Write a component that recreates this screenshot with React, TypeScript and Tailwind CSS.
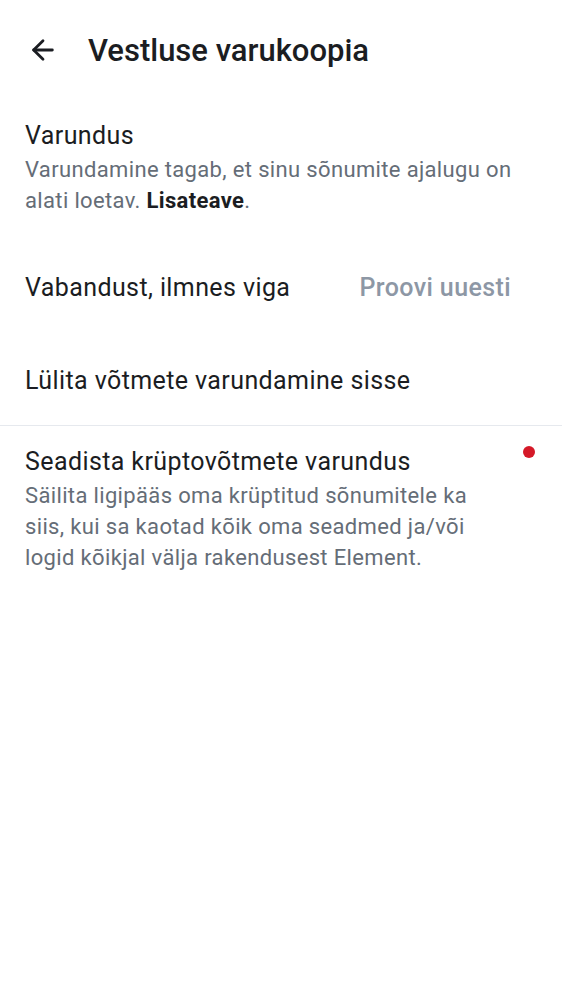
import { ArrowLeft } from 'lucide-react';

const FONT = { fontFamily: 'Roboto, "Noto Sans", sans-serif' };

export default function App() {
  return (
    <div className="min-h-screen w-full bg-white text-[#1b1d22]" style={FONT}>
      {/* top bar */}
      <div className="flex h-[100px] items-center">
        <button className="ml-[24px] flex h-[38px] w-[38px] items-center justify-center text-[#1b1d22]">
          <ArrowLeft className="h-[32px] w-[32px]" strokeWidth={2.1} />
        </button>
        <h1 className="ml-[26px] text-[31px] font-medium leading-none">
          Vestluse varukoopia
        </h1>
      </div>

      {/* Varundus */}
      <div className="px-[25px] pb-[25px] pt-[18px]">
        <div className="text-[25px] leading-[36px] tracking-[0.4px]">Varundus</div>
        <p className="pr-[25px] text-[22px] leading-[31px] tracking-[0.35px] text-[#656d77]">
          Varundamine tagab, et sinu sõnumite ajalugu on alati loetav.{' '}
          <span className="font-bold text-[#1b1d22]">Lisateave</span>.
        </p>
      </div>

      {/* error row */}
      <div className="flex h-[94px] items-center justify-between pl-[25px] pr-[51px]">
        <span className="text-[25px] tracking-[0.4px]">Vabandust, ilmnes viga</span>
        <span className="text-[25px] font-medium tracking-[0.4px] text-[#8d97a5]">Proovi uuesti</span>
      </div>

      {/* toggle row */}
      <div className="flex h-[90px] items-center px-[25px] pt-[2px]">
        <span className="text-[25px] tracking-[0.4px]">Lülita võtmete varundamine sisse</span>
      </div>

      <div className="h-px bg-[#e6e9ee]" />

      {/* recovery setup */}
      <div className="relative pl-[25px] pr-[82px] pt-[18px]">
        <div className="whitespace-nowrap text-[25px] leading-[36px] tracking-[0.4px]">
          Seadista krüptovõtmete varundus
        </div>
        <p className="text-[22px] leading-[31px] tracking-[0.35px] text-[#656d77]">
          Säilita ligipääs oma krüptitud sõnumitele ka siis, kui sa kaotad kõik oma seadmed ja/või logid kõikjal välja rakendusest Element.
        </p>
        <span className="absolute right-[27px] top-[20px] h-[12px] w-[12px] rounded-full bg-[#d51928]" />
      </div>
    </div>
  );
}
